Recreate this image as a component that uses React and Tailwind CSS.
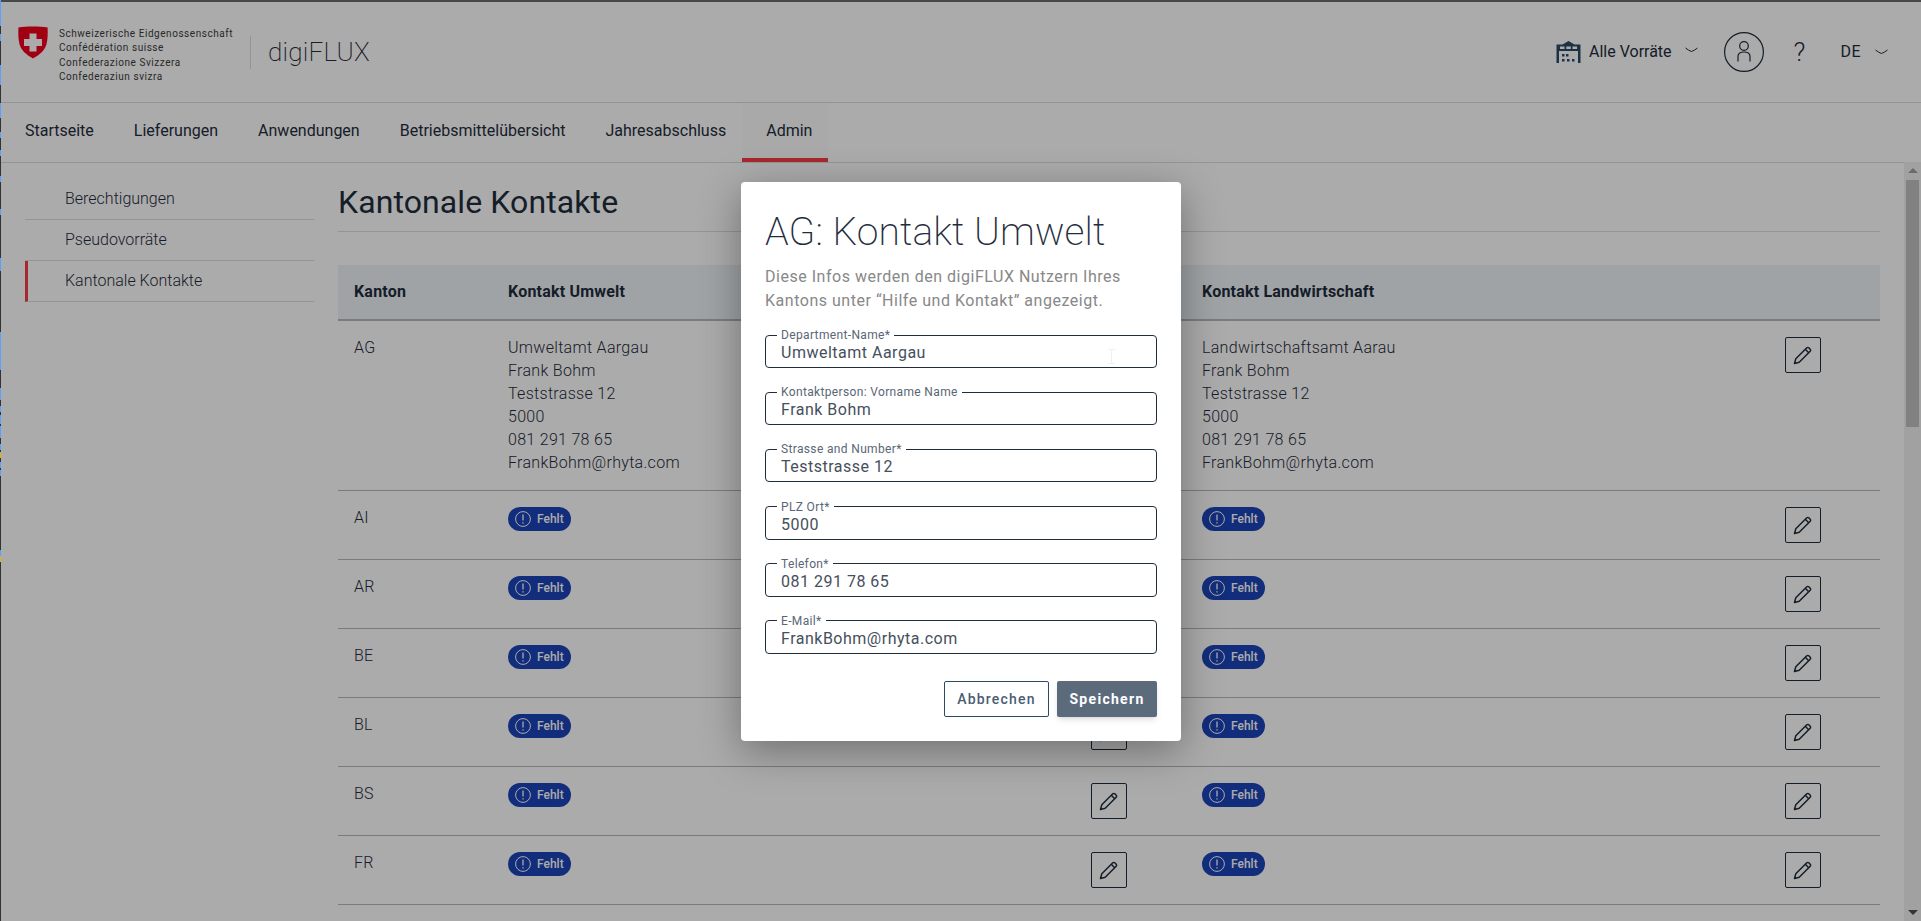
const EDGE_MARKS = [
  [0, 26, '#5aa0ff'], [34, 7, '#5aa0ff'], [65, 20, '#5aa0ff'], [103, 15, '#5aa0ff'], [132, 6, '#5aa0ff'],
  [150, 6, '#5aa0ff'], [176, 6, '#5aa0ff'], [209, 6, '#5aa0ff'], [258, 13, '#5aa0ff'], [332, 38, '#5aa0ff'],
  [388, 12, '#5aa0ff'], [406, 6, '#5aa0ff'], [415, 9, '#5aa0ff'], [426, 12, '#5aa0ff'], [444, 6, '#5aa0ff'],
  [452, 6, '#e0b020'], [462, 6, '#5aa0ff'], [470, 6, '#5aa0ff'], [550, 6, '#5aa0ff'], [556, 6, '#e0b020'],
]

function Shield() {
  return (
    <svg width="30" height="33" viewBox="0 0 30 33" className="shrink-0">
      <path d="M15 .6C10 .6 4 .8.4 1.600c-.2 6-.2 12 1.200 17 1.800 6 7 10.600 13.400 13.800 6.400-3.200 11.600-7.800 13.400-13.800 1.400-5 1.400-11 1.200-17C26 .8 20 .6 15 .6z" fill="#f0001c" />
      <path d="M11.500 7.500h7v5.500h5.500v7h-5.500v5.500h-7V20H6v-7h5.500z" fill="#fff" />
    </svg>
  )
}

function Warehouse() {
  return (
    <svg width="25" height="22" viewBox="0 0 25 22" fill="#2b4a68" className="shrink-0">
      <path d="M12.500 0l6 3.500H24.500V22H22V10H3v12H.5V3.500h6z" />
      <path d="M4 5.500h4.500V8H4zM10.300 5.500h4.500V8h-4.500zM16.500 5.500H21V8h-4.500z" fill="#fff" />
      <path d="M6 13h2.500v2.500H6zM10 13h2.500v2.500H10zM6 18h2.500v2.500H6zM11 18h2.500v2.500H11zM16 18h2.500v2.500H16z" />
    </svg>
  )
}

function Chevron() {
  return (
    <svg width="13" height="6" viewBox="0 0 13 6" fill="none" stroke="#1f2d3d" strokeWidth="1" className="shrink-0">
      <path d="M.5 1c2 1.600 4 2.800 6 3.500 2-.7 4-1.900 6-3.500" />
    </svg>
  )
}

function UserIcon() {
  return (
    <svg width="40" height="40" viewBox="0 0 40 40" fill="none" stroke="#1f2d3d" strokeWidth="1.200" className="shrink-0">
      <circle cx="20" cy="20" r="19.400" />
      <circle cx="20" cy="14" r="4.300" />
      <path d="M14 29.500V24.500c0-3 2.500-4.500 6-4.500s6 1.500 6 4.500v5" />
    </svg>
  )
}

function PencilIcon() {
  return (
    <svg width="20" height="20" viewBox="0 0 20 20" fill="none" stroke="#1f2d3d" strokeWidth="1.500" strokeLinejoin="round">
      <path d="M1.500 18.500l1.300-4.700L13.800 2.800a1.400 1.400 0 0 1 2 0l1.400 1.400a1.400 1.400 0 0 1 0 2L6.200 17.200z" />
      <path d="M12.300 4.300l3.400 3.400" />
    </svg>
  )
}

function EditButton() {
  return (
    <button type="button" className="w-9 h-9 border border-[#1f2d3d] rounded-[2px] flex items-center justify-center">
      <PencilIcon />
    </button>
  )
}

function MissingBadge() {
  return (
    <span className="inline-flex items-center gap-[6px] h-6 w-[63px] pl-[7px] rounded-xl bg-[#1c43b8] text-white text-xs font-medium">
      <svg width="16" height="16" viewBox="0 0 16 16" fill="none" stroke="#fff" strokeWidth="1" className="shrink-0">
        <circle cx="8" cy="8" r="7.400" />
        <path d="M8 3.500v6M8 11.200v1.300" strokeWidth="1.300" />
      </svg>
      Fehlt
    </span>
  )
}

function ContactBlock({ lines }) {
  return (
    <div className="-mt-px leading-[23px] tracking-[0.3px] font-light">
      {lines.map((line) => (
        <div key={line}>{line}</div>
      ))}
    </div>
  )
}

const UMWELT = ['Umweltamt Aargau', 'Frank Bohm', 'Teststrasse 12', '5000', '081 291 78 65', 'FrankBohm@rhyta.com']
const LANDWIRTSCHAFT = ['Landwirtschaftsamt Aarau', 'Frank Bohm', 'Teststrasse 12', '5000', '081 291 78 65', 'FrankBohm@rhyta.com']
const CANTONS = ['AI', 'AR', 'BE', 'BL', 'BS', 'FR']
const NAV = ['Startseite', 'Lieferungen', 'Anwendungen', 'Betriebsmittelübersicht', 'Jahresabschluss']
const SIDE = ['Berechtigungen', 'Pseudovorräte']
const FIELDS = [
  { label: 'Department-Name*', value: 'Umweltamt Aargau' },
  { label: 'Kontaktperson: Vorname Name', value: 'Frank Bohm' },
  { label: 'Strasse and Number*', value: 'Teststrasse 12' },
  { label: 'PLZ Ort*', value: '5000' },
  { label: 'Telefon*', value: '081 291 78 65' },
  { label: 'E-Mail*', value: 'FrankBohm@rhyta.com' },
]

function Row({ name, umwelt, land }) {
  return (
    <div className="flex border-b border-[#b3bac2] pt-4 pb-4 min-h-[69px]">
      <div className="w-[170px] pl-4 -mt-px font-light tracking-[0.3px] leading-[23px]">{name}</div>
      <div className="w-[583px]">{umwelt || <MissingBadge />}</div>
      <div className="w-[111px]"><EditButton /></div>
      <div className="w-[583px]">{land || <MissingBadge />}</div>
      <div><EditButton /></div>
    </div>
  )
}

function Field({ label, value, cursor }) {
  return (
    <fieldset className="relative h-[37px] border border-[#1f2d3d] rounded-[4px] pl-[11px] pr-3 mb-[20.200px]">
      <legend className="px-1 text-xs leading-[8px] tracking-[0.35px] text-[#5a6675]">{label}</legend>
      <div className="ml-1 mt-1 text-base leading-5 tracking-[0.5px] text-[#464f5c]">{value}</div>
      {cursor ? (
        <svg width="7" height="15" viewBox="0 0 7 15" fill="none" stroke="#f0f0f0" className="absolute left-[342px] top-[10px]">
          <path d="M0 .5h7M3.500 .5v14M0 14.500h7" />
        </svg>
      ) : null}
    </fieldset>
  )
}

export default function App() {
  return (
    <div className="relative w-[1921px] h-[921px] overflow-hidden bg-white text-[#1f2d3d] font-['Roboto',sans-serif]">
      <div className="h-[2px] bg-[#6a6a6a]" />
      <header className="h-[101px] border-b border-[#ddd] flex items-center pl-[18px] pr-[33px]">
        <div className="flex items-start self-start mt-6">
          <Shield />
          <div className="ml-[11px] mt-px text-[10px] leading-[14.300px] tracking-[0.54px] text-[#3c3c3c]">
            <div>Schweizerische Eidgenossenschaft</div>
            <div>Confédération suisse</div>
            <div>Confederazione Svizzera</div>
            <div>Confederaziun svizra</div>
          </div>
        </div>
        <div className="w-px h-[33px] bg-[#ddd] ml-[17px]" />
        <div className="ml-[17px] text-[26px] font-extralight tracking-[0.2px]">digiFLUX</div>
        <div className="ml-auto flex items-center">
          <Warehouse />
          <span className="ml-2 -mt-px">Alle Vorräte</span>
          <span className="ml-[13px] mr-[26px] -mt-1"><Chevron /></span>
          <UserIcon />
          <span className="ml-[30px] text-[26px] font-light">?</span>
          <span className="ml-[35px] tracking-[0.5px]">DE</span>
          <span className="ml-[14px]"><Chevron /></span>
        </div>
      </header>
      <nav className="h-[60px] border-b border-[#ddd] flex items-stretch pl-[5px]">
        {NAV.map((item) => (
          <div key={item} className="px-5 pb-[3px] flex items-center">{item}</div>
        ))}
        <div className="-ml-1 pl-6 pr-4 flex items-center bg-[#fcfcfc] border-b-4 border-[#f83c45]">Admin</div>
      </nav>
      <div className="flex">
        <aside className="w-[289px] ml-[25px] pt-4 shrink-0">
          {SIDE.map((item) => (
            <div key={item} className="h-[41px] flex items-center pl-10 border-b border-[#ddd] font-light">{item}</div>
          ))}
          <div className="h-[41px] flex items-center pl-[37px] border-l-[3px] border-[#f83c45] border-b-[#ddd] border-b font-light">Kantonale Kontakte</div>
        </aside>
        <main className="ml-6 w-[1542px] shrink-0">
          <h1 className="h-[69px] pt-[17px] text-[32px] leading-[44px] tracking-[0.1px] border-b border-[#ddd] font-normal">Kantonale Kontakte</h1>
          <div className="mt-[33px] h-[56px] flex items-center bg-[#eef3f7] border-b-2 border-[#b3bac2] font-bold tracking-[0.2px]">
            <div className="w-[170px] pl-4">Kanton</div>
            <div className="w-[694px]">Kontakt Umwelt</div>
            <div>Kontakt Landwirtschaft</div>
          </div>
          <Row name="AG" umwelt={<ContactBlock lines={UMWELT} />} land={<ContactBlock lines={LANDWIRTSCHAFT} />} />
          {CANTONS.map((name) => (
            <Row key={name} name={name} />
          ))}
        </main>
      </div>

      <div className="absolute top-[162px] bottom-0 right-0 w-[17px] bg-[#f1f1f1]">
        <div className="mx-auto mt-[6px] w-0 h-0 border-x-[5px] border-x-transparent border-b-[5px] border-b-[#a0a0a0]" />
        <div className="mt-[7px] w-[13px] mx-auto h-[247px] bg-[#c1c1c1]" />
        <div className="absolute bottom-[6px] left-[4px] w-0 h-0 border-x-[5px] border-x-transparent border-t-[5px] border-t-[#505050]" />
      </div>

      <div className="absolute inset-0 bg-black/33" />

      <div className="absolute left-0 top-0 w-px h-[921px] bg-[#333]">
        {EDGE_MARKS.map(([top, height, color]) => (
          <div key={top} className="absolute left-0 w-px" style={{ top, height, background: color }} />
        ))}
      </div>

      <div className="absolute left-[741px] top-[182px] w-[440px] h-[559px] bg-white rounded-[4px] shadow-[0_10px_40px_rgba(0,0,0,0.35)] px-6 pt-[26px]">
        <h2 className="text-[39px] leading-[48px] font-extralight tracking-[0.1px]">AG: Kontakt Umwelt</h2>
        <p className="mt-[9px] text-base leading-6 tracking-[0.52px] text-[#888]">
          Diese Infos werden den digiFLUX Nutzern Ihres<br />Kantons unter “Hilfe und Kontakt” angezeigt.
        </p>
        <div className="mt-[18px]">
          {FIELDS.map((field, index) => (
            <Field key={field.label} label={field.label} value={field.value} cursor={index === 0} />
          ))}
        </div>
        <div className="flex justify-end gap-2 mt-[27px]">
          <button type="button" className="w-[105px] h-9 border border-[#2b4a68] rounded-[2px] text-sm font-medium tracking-[1.200px] text-[#4a5d75]">Abbrechen</button>
          <button type="button" className="w-[100px] h-9 rounded-[2px] bg-[#5b6b7c] text-sm font-bold tracking-[1.300px] text-white shadow-md">Speichern</button>
        </div>
      </div>
    </div>
  )
}
